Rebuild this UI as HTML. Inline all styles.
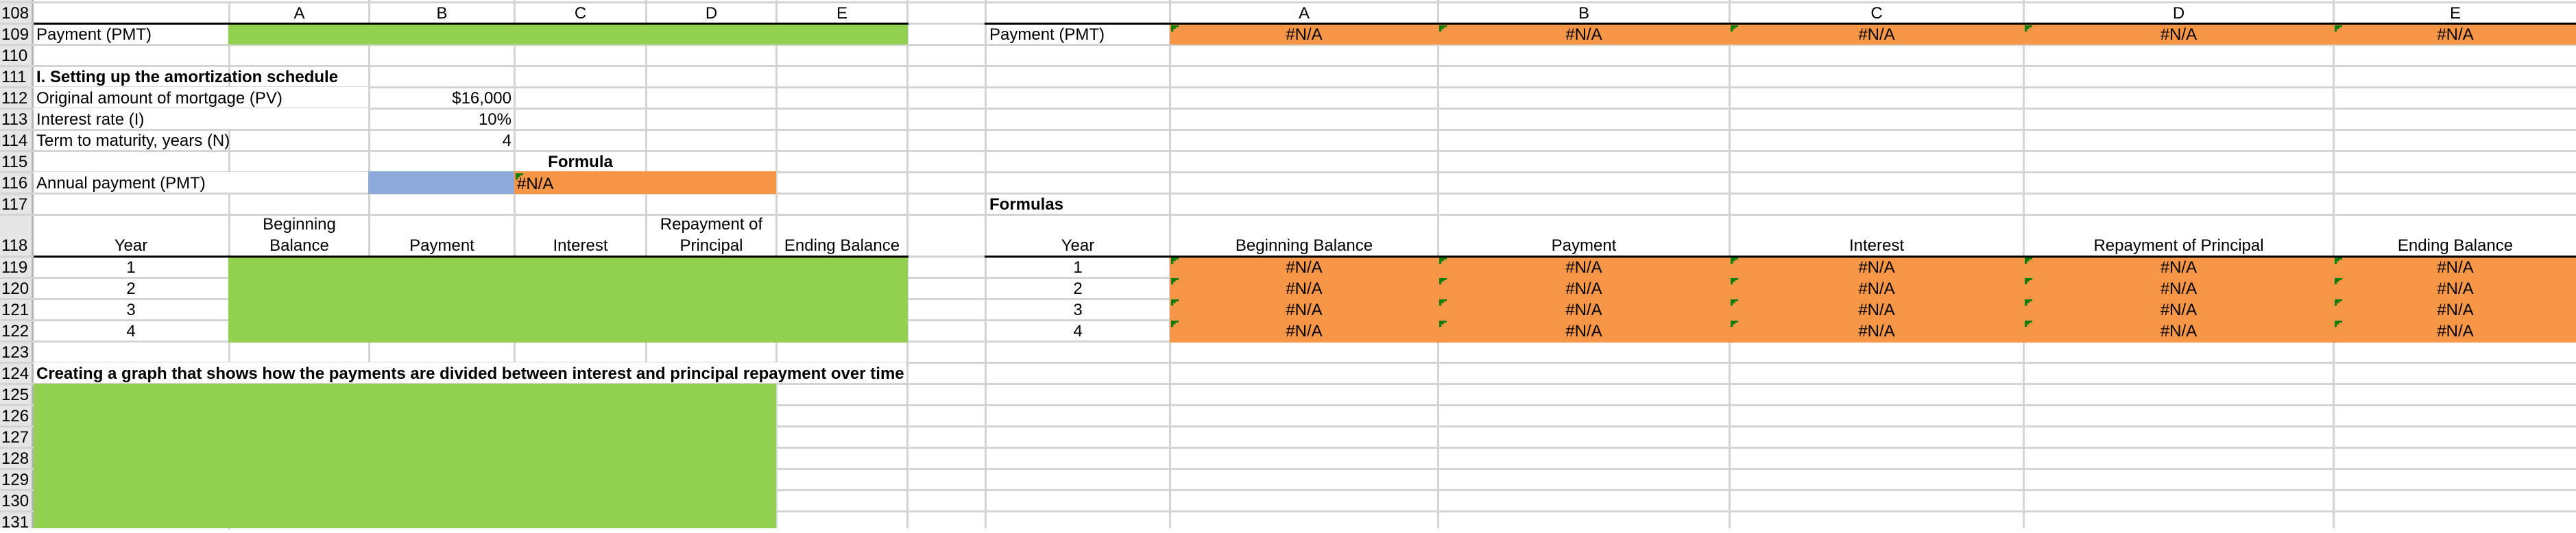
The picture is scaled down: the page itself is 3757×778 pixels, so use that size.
<!DOCTYPE html>
<html><head><meta charset="utf-8"><style>
*{margin:0;padding:0;box-sizing:border-box}
body{width:3757px;height:771px;overflow:hidden;background:#fff;position:relative;font-family:"Liberation Sans",Arial,sans-serif;font-size:24px;color:#000}
div{position:absolute}
.h{height:3px;background:#d4d4d4;left:0;width:3757px}
.v{width:3px;background:#d4d4d4;top:0;height:771px}
.t{display:flex;align-items:center;white-space:nowrap;height:31px}
.c{justify-content:center}
.r{justify-content:flex-end}
.b{font-weight:bold}
.g{background:#92d050}
.o{background:#f79646}
.tri{width:11px;height:9px;background:#0a7d0a;clip-path:polygon(0 0,100% 0,100% 30%,60% 30%,60% 60%,30% 60%,30% 100%,0 100%)}
.rn{left:0;width:47px;padding-left:2px}
</style></head><body>
<div style="left:0;top:0;width:47px;height:771px;background:#e6e6e6"></div>
<div style="left:46px;top:0;width:3px;height:771px;background:#b4b4b4"></div>

<div class="h" style="top:2px"></div><div class="h" style="top:64px"></div><div class="h" style="top:95px"></div><div class="h" style="top:126px"></div><div class="h" style="top:157px"></div><div class="h" style="top:188px"></div><div class="h" style="top:219px"></div><div class="h" style="top:250px"></div><div class="h" style="top:281px"></div><div class="h" style="top:312px"></div>
<div class="h" style="top:404px"></div><div class="h" style="top:435px"></div><div class="h" style="top:466px"></div><div class="h" style="top:497px"></div><div class="h" style="top:528px"></div><div class="h" style="top:559px"></div><div class="h" style="top:590px"></div><div class="h" style="top:621px"></div><div class="h" style="top:652px"></div><div class="h" style="top:683px"></div><div class="h" style="top:714px"></div><div class="h" style="top:745px"></div>
<div class="h" style="top:33px"></div><div class="h" style="top:373px"></div>

<div class="v" style="left:333px;top:2px"></div><div class="v" style="left:537px"></div><div class="v" style="left:749px"></div><div class="v" style="left:941px"></div><div class="v" style="left:1131px"></div><div class="v" style="left:1322px"></div><div class="v" style="left:1436px"></div><div class="v" style="left:1705px"></div><div class="v" style="left:2096px"></div><div class="v" style="left:2521px"></div><div class="v" style="left:2950px"></div><div class="v" style="left:3402px"></div>

<div style="left:49px;top:127px;width:488px;height:30px;background:#fff"></div>
<div style="left:49px;top:158px;width:488px;height:30px;background:#fff"></div>
<div style="left:49px;top:251px;width:488px;height:30px;background:#fff"></div>
<div style="left:49px;top:529px;width:1273px;height:30px;background:#fff"></div>

<div style="left:49px;top:33px;width:1276px;height:3px;background:#000"></div>
<div style="left:1436px;top:33px;width:2321px;height:3px;background:#000"></div>
<div style="left:49px;top:373px;width:1276px;height:3px;background:#000"></div>
<div style="left:1436px;top:373px;width:2321px;height:3px;background:#000"></div>

<div class="g" style="left:333px;top:36px;width:991px;height:29px"></div>
<div class="g" style="left:333px;top:376px;width:991px;height:124px"></div>
<div class="g" style="left:49px;top:560px;width:1083px;height:211px"></div>
<div style="left:537px;top:250px;width:213px;height:33px;background:#8eaadb"></div>
<div class="o" style="left:750px;top:250px;width:382px;height:33px"></div>
<div class="o" style="left:1706px;top:36px;width:2051px;height:29px"></div>
<div class="o" style="left:1706px;top:376px;width:2051px;height:124px"></div>

<div class="tri" style="left:752px;top:253px"></div>
<div class="tri" style="left:1708px;top:37px"></div><div class="tri" style="left:2099px;top:37px"></div><div class="tri" style="left:2524px;top:37px"></div><div class="tri" style="left:2953px;top:37px"></div><div class="tri" style="left:3405px;top:37px"></div>
<div class="tri" style="left:1708px;top:376px"></div><div class="tri" style="left:2099px;top:376px"></div><div class="tri" style="left:2524px;top:376px"></div><div class="tri" style="left:2953px;top:376px"></div><div class="tri" style="left:3405px;top:376px"></div>
<div class="tri" style="left:1708px;top:406px"></div><div class="tri" style="left:2099px;top:406px"></div><div class="tri" style="left:2524px;top:406px"></div><div class="tri" style="left:2953px;top:406px"></div><div class="tri" style="left:3405px;top:406px"></div>
<div class="tri" style="left:1708px;top:437px"></div><div class="tri" style="left:2099px;top:437px"></div><div class="tri" style="left:2524px;top:437px"></div><div class="tri" style="left:2953px;top:437px"></div><div class="tri" style="left:3405px;top:437px"></div>
<div class="tri" style="left:1708px;top:468px"></div><div class="tri" style="left:2099px;top:468px"></div><div class="tri" style="left:2524px;top:468px"></div><div class="tri" style="left:2953px;top:468px"></div><div class="tri" style="left:3405px;top:468px"></div>

<div class="t rn" style="top:4px">108</div><div class="t rn" style="top:35px">109</div><div class="t rn" style="top:66px">110</div><div class="t rn" style="top:97px">111</div><div class="t rn" style="top:128px">112</div><div class="t rn" style="top:159px">113</div><div class="t rn" style="top:190px">114</div><div class="t rn" style="top:221px">115</div><div class="t rn" style="top:252px">116</div><div class="t rn" style="top:283px">117</div><div class="t rn" style="top:343px">118</div><div class="t rn" style="top:375px">119</div><div class="t rn" style="top:406px">120</div><div class="t rn" style="top:437px">121</div><div class="t rn" style="top:468px">122</div><div class="t rn" style="top:499px">123</div><div class="t rn" style="top:530px">124</div><div class="t rn" style="top:561px">125</div><div class="t rn" style="top:592px">126</div><div class="t rn" style="top:623px">127</div><div class="t rn" style="top:654px">128</div><div class="t rn" style="top:685px">129</div><div class="t rn" style="top:716px">130</div><div class="t rn" style="top:747px">131</div>

<div class="t c" style="top:4px;left:336px;width:201px">A</div>
<div class="t c" style="top:4px;left:540px;width:209px">B</div>
<div class="t c" style="top:4px;left:752px;width:189px">C</div>
<div class="t c" style="top:4px;left:944px;width:187px">D</div>
<div class="t c" style="top:4px;left:1134px;width:188px">E</div>

<div class="t" style="top:35px;left:53px">Payment (PMT)</div>
<div class="t b" style="top:97px;left:53px">I. Setting up the amortization schedule</div>
<div class="t" style="top:128px;left:53px">Original amount of mortgage (PV)</div>
<div class="t" style="top:159px;left:53px">Interest rate (I)</div>
<div class="t" style="top:190px;left:53px">Term to maturity, years (N)</div>
<div class="t r" style="top:128px;left:540px;width:206px">$16,000</div>
<div class="t r" style="top:159px;left:540px;width:206px">10%</div>
<div class="t r" style="top:190px;left:540px;width:206px">4</div>
<div class="t c b" style="top:221px;left:752px;width:189px">Formula</div>
<div class="t" style="top:252px;left:53px">Annual payment (PMT)</div>
<div class="t" style="top:253px;left:754px">#N/A</div>

<div class="t c" style="top:343px;left:49px;width:284px">Year</div>
<div class="t c" style="top:312px;left:336px;width:201px">Beginning</div>
<div class="t c" style="top:343px;left:336px;width:201px">Balance</div>
<div class="t c" style="top:343px;left:540px;width:209px">Payment</div>
<div class="t c" style="top:343px;left:752px;width:189px">Interest</div>
<div class="t c" style="top:312px;left:944px;width:187px">Repayment of</div>
<div class="t c" style="top:343px;left:944px;width:187px">Principal</div>
<div class="t c" style="top:343px;left:1134px;width:188px">Ending Balance</div>

<div class="t c" style="top:375px;left:49px;width:284px">1</div>
<div class="t c" style="top:406px;left:49px;width:284px">2</div>
<div class="t c" style="top:437px;left:49px;width:284px">3</div>
<div class="t c" style="top:468px;left:49px;width:284px">4</div>

<div class="t b" style="top:530px;left:53px">Creating a graph that shows how the payments are divided between interest and principal repayment over time</div>

<div class="t c" style="top:4px;left:1708px;width:388px">A</div>
<div class="t c" style="top:4px;left:2099px;width:422px">B</div>
<div class="t c" style="top:4px;left:2524px;width:426px">C</div>
<div class="t c" style="top:4px;left:2953px;width:449px">D</div>
<div class="t c" style="top:4px;left:3405px;width:352px">E</div>

<div class="t" style="top:35px;left:1443px">Payment (PMT)</div>
<div class="t b" style="top:283px;left:1443px">Formulas</div>
<div class="t c" style="top:343px;left:1439px;width:266px">Year</div>
<div class="t c" style="top:343px;left:1708px;width:388px">Beginning Balance</div>
<div class="t c" style="top:343px;left:2099px;width:422px">Payment</div>
<div class="t c" style="top:343px;left:2524px;width:426px">Interest</div>
<div class="t c" style="top:343px;left:2953px;width:449px">Repayment of Principal</div>
<div class="t c" style="top:343px;left:3405px;width:352px">Ending Balance</div>

<div class="t c" style="top:375px;left:1439px;width:266px">1</div>
<div class="t c" style="top:406px;left:1439px;width:266px">2</div>
<div class="t c" style="top:437px;left:1439px;width:266px">3</div>
<div class="t c" style="top:468px;left:1439px;width:266px">4</div>

<div class="t c" style="top:35px;left:1708px;width:388px">#N/A</div><div class="t c" style="top:35px;left:2099px;width:422px">#N/A</div><div class="t c" style="top:35px;left:2524px;width:426px">#N/A</div><div class="t c" style="top:35px;left:2953px;width:449px">#N/A</div><div class="t c" style="top:35px;left:3405px;width:352px">#N/A</div>
<div class="t c" style="top:375px;left:1708px;width:388px">#N/A</div><div class="t c" style="top:375px;left:2099px;width:422px">#N/A</div><div class="t c" style="top:375px;left:2524px;width:426px">#N/A</div><div class="t c" style="top:375px;left:2953px;width:449px">#N/A</div><div class="t c" style="top:375px;left:3405px;width:352px">#N/A</div>
<div class="t c" style="top:406px;left:1708px;width:388px">#N/A</div><div class="t c" style="top:406px;left:2099px;width:422px">#N/A</div><div class="t c" style="top:406px;left:2524px;width:426px">#N/A</div><div class="t c" style="top:406px;left:2953px;width:449px">#N/A</div><div class="t c" style="top:406px;left:3405px;width:352px">#N/A</div>
<div class="t c" style="top:437px;left:1708px;width:388px">#N/A</div><div class="t c" style="top:437px;left:2099px;width:422px">#N/A</div><div class="t c" style="top:437px;left:2524px;width:426px">#N/A</div><div class="t c" style="top:437px;left:2953px;width:449px">#N/A</div><div class="t c" style="top:437px;left:3405px;width:352px">#N/A</div>
<div class="t c" style="top:468px;left:1708px;width:388px">#N/A</div><div class="t c" style="top:468px;left:2099px;width:422px">#N/A</div><div class="t c" style="top:468px;left:2524px;width:426px">#N/A</div><div class="t c" style="top:468px;left:2953px;width:449px">#N/A</div><div class="t c" style="top:468px;left:3405px;width:352px">#N/A</div>
</body></html>
